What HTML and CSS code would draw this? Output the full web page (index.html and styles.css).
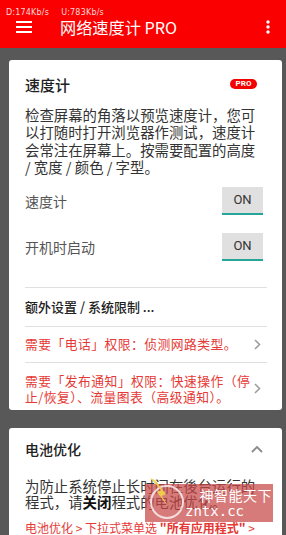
FILE: index.html
```html
<!DOCTYPE html>
<html lang="zh">
<head>
<meta charset="utf-8">
<title>网络速度计 PRO</title>
<link rel="stylesheet" href="styles.css">
</head>
<body>
<header class="appbar">
  <div class="status"><span>D:174Kb/s</span><span>U:783Kb/s</span></div>
  <div class="toolbar">
    <svg class="menu" width="16" height="12" viewBox="0 0 16 12"><rect x="0" y="0" width="16" height="2" fill="#fff"/><rect x="0" y="5" width="16" height="2" fill="#fff"/><rect x="0" y="10" width="16" height="2" fill="#fff"/></svg>
    <h1 class="title">网络速度计 PRO</h1>
    <svg class="more" width="4" height="14" viewBox="0 0 4 14"><circle cx="2" cy="2" r="1.7" fill="#fff"/><circle cx="2" cy="7" r="1.7" fill="#fff"/><circle cx="2" cy="12" r="1.7" fill="#fff"/></svg>
  </div>
</header>
<main class="content">
  <section class="card">
    <div class="card-head">
      <h2 class="card-title">速度计</h2>
      <span class="badge">PRO</span>
    </div>
    <p class="desc">检查屏幕的角落以预览速度计，您可以打随时打开浏览器作测试，速度计会常注在屏幕上。按需要配置的高度 / 宽度 / 颜色 / 字型。</p>
    <div class="toggle-row first">
      <span class="label">速度计</span>
      <span class="toggle">ON</span>
    </div>
    <div class="toggle-row">
      <span class="label">开机时启动</span>
      <span class="toggle">ON</span>
    </div>
    <div class="divider"></div>
    <div class="link-row">额外设置 / 系统限制 ...</div>
    <div class="divider"></div>
    <div class="perm-row single">
      <span class="perm-text">需要「电话」权限：侦测网路类型。</span>
      <svg class="chev" width="7" height="11" viewBox="0 0 7 11"><path d="M1 1 L5.5 5.5 L1 10" fill="none" stroke="#9e9e9e" stroke-width="1.6"/></svg>
    </div>
    <div class="divider"></div>
    <div class="perm-row double">
      <span class="perm-text">需要「发布通知」权限：快速操作（停止/恢复）、流量图表（高级通知）。</span>
      <svg class="chev" width="7" height="11" viewBox="0 0 7 11"><path d="M1 1 L5.5 5.5 L1 10" fill="none" stroke="#9e9e9e" stroke-width="1.6"/></svg>
    </div>
  </section>
  <section class="card second">
    <div class="card-head">
      <h2 class="card-title small">电池优化</h2>
      <svg class="up" width="12" height="8" viewBox="0 0 12 8"><path d="M1 7 L6 2 L11 7" fill="none" stroke="#8a8a8a" stroke-width="1.8"/></svg>
    </div>
    <p class="body">为防止系统停止长时间在後台运行的程式，请<b>关闭</b>程式的电池优化。</p>
    <p class="hint">电池优化 &gt; 下拉式菜单选 <b>"所有应用程式"</b> &gt;</p>
  </section>
</main>
<div class="watermark">
  <svg class="wm-logo" width="40" height="46" viewBox="0 0 40 46"><circle cx="20" cy="26" r="16" fill="none" stroke="rgba(255,255,255,0.75)" stroke-width="2"/><path d="M3 2 L14 14 L10 16 L22 32 L15 20 L19 18 L8 4 Z" fill="#f2d34a" opacity="0.9"/></svg>
  <div class="wm-text">
    <span class="wm-cn">神智能天下</span>
    <span class="wm-url">zntx.cc</span>
  </div>
</div>
</body>
</html>
```

FILE: styles.css
```css
html, body {
  margin: 0;
  padding: 0;
}
body {
  width: 286px;
  height: 535px;
  overflow: hidden;
  background: #585858;
  font-family: "Noto Sans CJK SC", "Noto Sans", sans-serif;
  position: relative;
}
.appbar {
  background: #fa0000;
  height: 48px;
  box-sizing: border-box;
  padding-top: 8px;
  color: #fff;
}
.status {
  display: flex;
  gap: 12px;
  padding-left: 6px;
  height: 10px;
  font: 8px/10px "DejaVu Sans", sans-serif;
  color: #ffd6d6;
  letter-spacing: 0.2px;
}
.toolbar {
  display: flex;
  align-items: center;
  height: 18px;
}
.menu {
  margin-left: 16px;
  flex: none;
}
.title {
  margin: 0 0 0 28px;
  font-size: 16.2px;
  font-weight: 400;
  line-height: 18px;
  flex: 1;
  white-space: nowrap;
}
.more {
  margin-right: 16px;
  flex: none;
}
.content {
  padding: 12px 4px 0 9px;
}
.card {
  background: #fff;
  border-radius: 3px;
  padding: 15px 15px 5px 16px;
}
.card-head {
  display: flex;
  align-items: center;
  justify-content: space-between;
  height: 20px;
}
.card-title {
  margin: 0;
  font-size: 15px;
  font-weight: 500;
  line-height: 20px;
  color: #212121;
}
.badge {
  background: #f40000;
  color: #fff;
  font: 700 8px/10px "Roboto", "Noto Sans", sans-serif;
  border-radius: 6px;
  width: 27px;
  height: 10px;
  text-align: center;
  margin-right: 10px;
  margin-top: -2px;
}
.desc {
  margin: 11px 0 0;
  width: 232px;
  font-size: 14.4px;
  line-height: 17.4px;
  color: #333;
}
.toggle-row {
  display: flex;
  align-items: center;
  justify-content: space-between;
  margin-top: 18px;
  height: 28px;
}
.toggle-row.first {
  margin-top: 11px;
}
.label {
  font-size: 14px;
  color: #555;
}
.toggle {
  width: 41px;
  height: 28px;
  box-sizing: border-box;
  background: #e0e0e0;
  border-bottom: 2px solid #26a69a;
  font: 13px/26px "Roboto", sans-serif;
  color: #333;
  text-align: center;
  margin-right: 4px;
}
.divider {
  height: 1px;
  background: #e0e0e0;
}
.toggle-row + .divider {
  margin-top: 26px;
}
.link-row {
  height: 38px;
  line-height: 38px;
  font-size: 13px;
  font-weight: 500;
  color: #222;
}
.perm-row {
  display: flex;
  align-items: center;
  justify-content: space-between;
  color: #e53935;
  font-size: 12.8px;
  line-height: 16px;
}
.perm-row.single {
  height: 35px;
}
.perm-row.double {
  padding: 10px 0 0;
}
.perm-text {
  flex: none;
  width: 229px;
  letter-spacing: 0.45px;
}
.chev {
  margin-right: 6px;
  flex: none;
}
.card.second {
  margin-top: 18px;
  padding-top: 11px;
  padding-bottom: 20px;
}
.card-title.small {
  font-size: 14px;
}
.up {
  margin-right: 4px;
}
.body {
  margin: 19px 0 0;
  width: 234px;
  font-size: 14.4px;
  line-height: 16.6px;
  color: #333;
}
.body b {
  color: #111;
  font-weight: 700;
}
.hint {
  margin: 9px 0 0;
  font-size: 12px;
  line-height: 16px;
  color: #e53935;
  white-space: nowrap;
}
.watermark {
  position: absolute;
  left: 145px;
  top: 484px;
  width: 128px;
  height: 38px;
  background: rgba(200, 70, 70, 0.72);
  display: flex;
  align-items: center;
}
.wm-logo {
  position: absolute;
  left: 2px;
  top: -8px;
}
.wm-text {
  display: flex;
  flex-direction: column;
  align-items: flex-end;
  margin-left: auto;
  margin-right: 1px;
  color: #fff;
}
.wm-cn {
  font-size: 14px;
  line-height: 16px;
  letter-spacing: 0.5px;
}
.wm-url {
  font: 14px/16px "DejaVu Sans Mono", monospace;
  margin-right: 28px;
}
```
